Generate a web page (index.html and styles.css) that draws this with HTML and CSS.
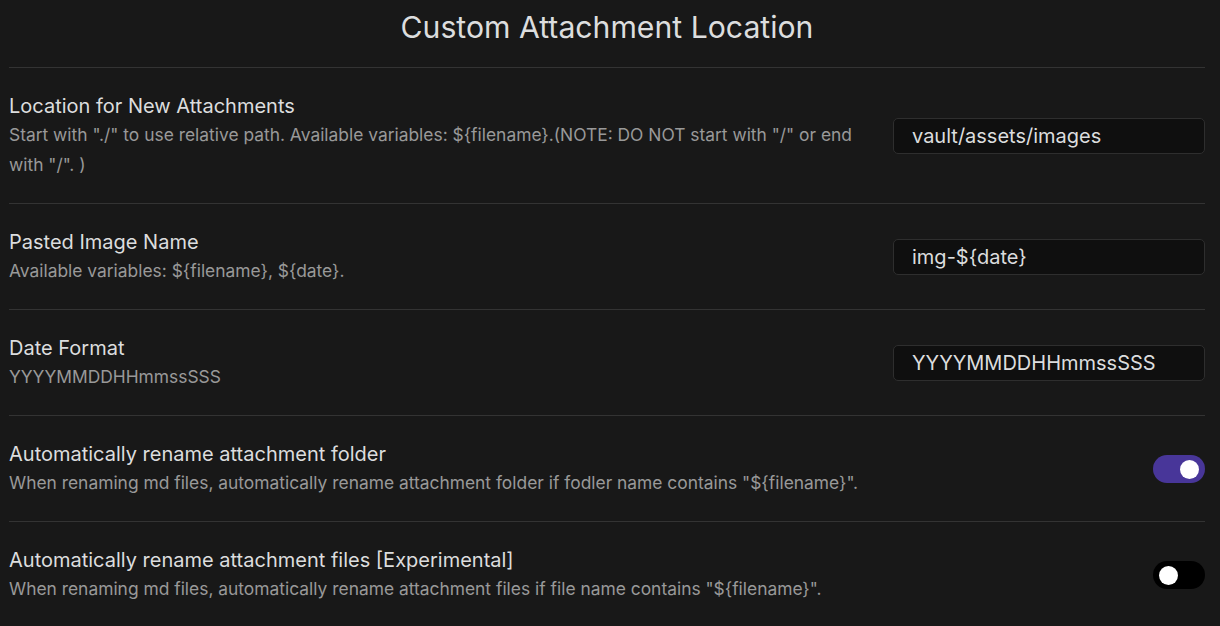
FILE: index.html
```html
<!DOCTYPE html>
<html>
<head>
<meta charset="utf-8">
<link rel="stylesheet" href="styles.css">
</head>
<body>
<div class="settings">
  <h2 class="title">Custom Attachment Location</h2>
  <div class="item">
    <div class="info">
      <div class="name">Location for New Attachments</div>
      <div class="desc">Start with "./" to use relative path. Available variables: ${filename}.(NOTE: DO NOT start with "/" or end with "/". )</div>
    </div>
    <div class="control"><input class="text" type="text" value="vault/assets/images"></div>
  </div>
  <div class="item">
    <div class="info">
      <div class="name">Pasted Image Name</div>
      <div class="desc">Available variables: ${filename}, ${date}.</div>
    </div>
    <div class="control"><input class="text" type="text" value="img-${date}"></div>
  </div>
  <div class="item">
    <div class="info">
      <div class="name">Date Format</div>
      <div class="desc">YYYYMMDDHHmmssSSS</div>
    </div>
    <div class="control"><input class="text" type="text" value="YYYYMMDDHHmmssSSS"></div>
  </div>
  <div class="item">
    <div class="info">
      <div class="name">Automatically rename attachment folder</div>
      <div class="desc">When renaming md files, automatically rename attachment folder if fodler name contains "${filename}".</div>
    </div>
    <div class="control"><div class="toggle on"><span class="knob"></span></div></div>
  </div>
  <div class="item">
    <div class="info">
      <div class="name">Automatically rename attachment files [Experimental]</div>
      <div class="desc">When renaming md files, automatically rename attachment files if file name contains "${filename}".</div>
    </div>
    <div class="control"><div class="toggle"><span class="knob"></span></div></div>
  </div>
</div>
</body>
</html>
```
FILE: styles.css
```css
* { box-sizing: border-box; }
html, body { margin: 0; padding: 0; background: #181818; overflow: hidden; }
body {
  font-family: Inter, "Noto Sans", sans-serif;
  color: #dcddde;
  padding: 0 15px 0 9px;
}
.settings { width: 1196px; }
.title {
  margin: 0;
  padding: 8px 0 21px;
  font-size: 30.2px;
  line-height: 38px;
  font-weight: 400;
  text-align: center;
  color: #dcddde;
  border-bottom: 1px solid #333;
}
.item {
  display: flex;
  align-items: center;
  padding: 24px 0 23px;
  border-bottom: 1px solid #333;
}
.info { flex: 1 1 auto; margin-right: 40px; }
.name { font-size: 20px; line-height: 28px; color: #dcddde; }
.desc { font-size: 17.4px; line-height: 30px; color: #999; }
.control { flex: 0 0 auto; display: flex; align-items: center; }
.text {
  width: 312px;
  height: 36px;
  padding: 0 18px;
  font-family: Inter, "Noto Sans", sans-serif;
  font-size: 20px;
  color: #dcddde;
  background: #0f0f0f;
  border: 1px solid #2e2e2e;
  border-radius: 5px;
  outline: none;
}
.toggle {
  width: 52px;
  height: 28px;
  border-radius: 14px;
  background: #000;
  display: flex;
  align-items: center;
  padding: 0 6px;
}
.toggle.on { background: #483699; justify-content: flex-end; }
.knob { width: 19px; height: 19px; border-radius: 50%; background: #fff; }
```
